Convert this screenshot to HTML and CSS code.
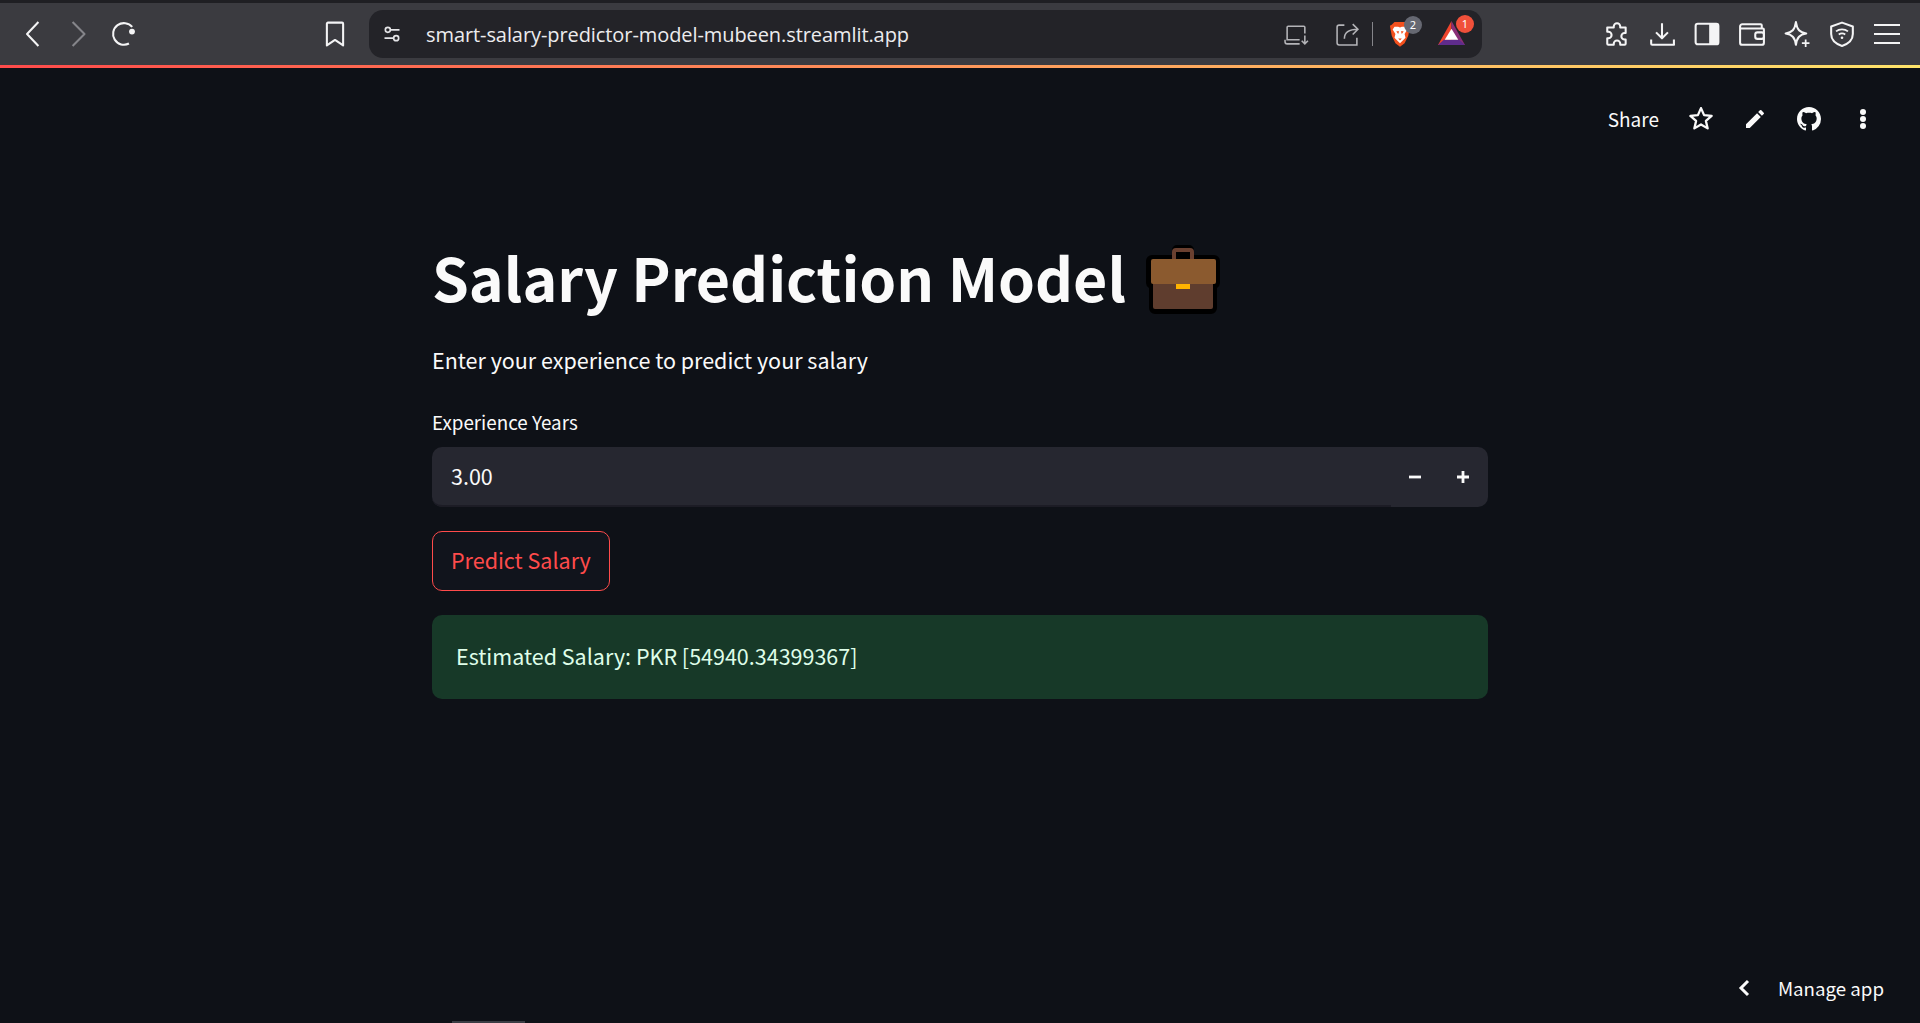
FILE: index.html
```html
<!DOCTYPE html>
<html>
<head>
  <title>Salary Prediction Model</title>
  <link rel="stylesheet" href="styles.css">
</head>
<body>
  <div class="top-strip"></div>
  <div class="toolbar">
    <div class="nav-buttons">
      <svg class="tool-icon" viewBox="0 0 24 24"><path d="M17 1 6.500 12 17 23"/></svg>
      <svg class="tool-icon dim" viewBox="0 0 24 24"><path d="M7 1l11 11L7 23"/></svg>
      <svg class="tool-icon" viewBox="0 0 24 24"><path d="M17.500 20.800A10 10 0 1 1 20.500 5.500"/><circle class="solid" cx="20.300" cy="9.800" r="2.700"/></svg>
    </div>
    <svg class="tool-icon bookmark" viewBox="0 0 24 24"><path d="M5.500 1.500h13a1 1 0 0 1 1 1v20L12 17.500l-7.500 5v-20a1 1 0 0 1 1-1z"/></svg>
    <div class="address-bar">
      <svg class="small-icon" viewBox="0 0 24 24"><circle cx="7" cy="7" r="3"/><path d="M10 7h11M3 17h11"/><circle cx="17" cy="17" r="3"/></svg>
      <span class="url">smart-salary-predictor-model-mubeen.streamlit.app</span>
      <svg class="addr-icon laptop" viewBox="0 0 24 24"><path d="M15 17H3V5a1 1 0 0 1 1-1h15a1 1 0 0 1 1 1v6M1 17v2a2 2 0 0 0 2 2h12M20 13v8m-3-3 3 3 3-3"/></svg>
      <svg class="addr-icon share-icon" viewBox="0 0 24 24"><path d="M9 3H4a2 2 0 0 0-2 2v15a2 2 0 0 0 2 2h17v-7M9 16c0-6 4-9 13-9M17 2l5 5-5 5"/></svg>
      <div class="addr-sep"></div>
      <div class="shield-wrap">
        <svg class="brave-icon" viewBox="0 0 24 28"><path class="brave-body" d="M6 1h12l3 3 2 1-2 11-4 8-5 4-5-4-4-8L1 5l2-1z"/><path class="brave-face" d="M6 6h4l2 1 2-1h4l2 3-3 5 1 4-6 6-6-6 1-4-3-5z"/><path class="brave-eyes" d="M8 11h3l-1 3zM16 11h-3l1 3zM10 19h4l-2 2z"/></svg>
        <span class="badge badge-gray">2</span>
      </div>
      <div class="bat-wrap">
        <svg class="bat-icon" viewBox="0 0 28 28" preserveAspectRatio="none"><path class="bat-left" d="M14 0 0 28h14z"/><path class="bat-right" d="M14 0l14 28H14z"/><path class="bat-base" d="M0 28l6-6h16l6 6z"/><path class="bat-inner" d="M14 9l7 13H7z"/></svg>
        <span class="badge badge-red">1</span>
      </div>
    </div>
    <div class="extensions">
      <svg class="tool-icon" viewBox="0 0 24 24"><path d="M9 5a3 3 0 1 1 6 0v1h5v5h-1a3 3 0 1 0 0 6h1v4a1 1 0 0 1-1 1h-4v-1a3 3 0 1 0-6 0v1H4a1 1 0 0 1-1-1v-5h1a3 3 0 1 0 0-6H3V6h6z"/></svg>
      <svg class="tool-icon" viewBox="0 0 24 24"><path d="M12 2v14M6.500 10.500 12 16l5.500-5.500M2 17v4a1 1 0 0 0 1 1h20a1 1 0 0 0 0-1v-4"/></svg>
      <svg class="tool-icon" viewBox="0 0 24 24"><rect x="1.500" y="2.500" width="21" height="19" rx="2"/><rect class="solid" x="14" y="2.500" width="8.500" height="19"/></svg>
      <svg class="tool-icon" viewBox="0 0 24 24"><path d="M21 7V4a1 1 0 0 0-1-1H3a2 2 0 0 0-2 2v15a2 2 0 0 0 2 2h18a2 2 0 0 0 2-2V8a1 1 0 0 0-1-1H1"/><rect x="15" y="10.500" width="8" height="6" rx="2"/></svg>
      <svg class="tool-icon" viewBox="0 0 24 24"><path d="M11 1c1 7 3.500 9.500 9.500 10.500C14.500 12.500 12 15 11 22 10 15 7.500 12.500 1.500 11.500 7.500 10.500 10 8 11 1z"/><path class="thin" d="M20 17v7M16.500 20.500h7"/></svg>
      <svg class="tool-icon" viewBox="0 0 24 24"><path d="M12 1.500 22 5v7c0 5-4 9-10 11C6 21 2 17 2 12V5z"/><path class="thin" d="M6.500 9.500c3-2.500 8-2.500 11 0M9 12.500c2-1.500 4-1.500 6 0"/><circle class="solid" cx="12" cy="15.500" r="1.200"/></svg>
      <svg class="tool-icon" viewBox="0 0 24 24"><path d="M0 3.700h24M0 12h24M0 20.300h24"/></svg>
    </div>
  </div>
  <div class="gradient-line"></div>

  <div class="app">
    <div class="app-header">
      <span class="share-link">Share</span>
      <svg class="head-icon" viewBox="1.500 2 21 21"><path class="outline" d="m12 3 2.700 6.100 6.600.7-5 4.400 1.500 6.500L12 17.300l-5.800 3.400 1.500-6.500-5-4.400 6.600-.7z"/></svg>
      <svg class="head-icon" viewBox="0 0 24 24"><path d="M3 17.250V21h3.750L17.810 9.940l-3.750-3.750zM20.710 7.040a1 1 0 0 0 0-1.410l-2.340-2.340a1 1 0 0 0-1.410 0l-1.830 1.830 3.750 3.750z"/></svg>
      <svg class="head-icon" viewBox="0 0 16 16"><path d="M8 0C3.580 0 0 3.580 0 8c0 3.540 2.290 6.530 5.470 7.590.4.070.55-.17.55-.38 0-.19-.01-.82-.01-1.490-2.010.37-2.530-.49-2.690-.94-.09-.23-.48-.94-.82-1.130-.28-.15-.68-.52-.01-.53.63-.01 1.080.58 1.230.82.720 1.210 1.870.87 2.330.66.070-.52.280-.87.510-1.070-1.780-.2-3.640-.89-3.640-3.950 0-.87.310-1.590.82-2.150-.08-.2-.36-1.020.08-2.120 0 0 .67-.21 2.200.82.640-.18 1.320-.27 2-.27s1.360.09 2 .27c1.530-1.040 2.200-.82 2.200-.82.440 1.100.160 1.920.080 2.120.51.560.82 1.270.82 2.150 0 3.070-1.870 3.750-3.650 3.950.29.250.54.730.54 1.480 0 1.070-.01 1.930-.01 2.200 0 .21.150.46.550.38A8.010 8.010 0 0 0 16 8c0-4.420-3.580-8-8-8z"/></svg>
      <svg class="head-icon" viewBox="0 0 24 24"><circle cx="12" cy="5" r="3"/><circle cx="12" cy="12" r="3"/><circle cx="12" cy="19" r="3"/></svg>
    </div>

    <div class="block-container">
      <div class="title-row">
        <h1>Salary Prediction Model</h1>
        <svg class="emoji" viewBox="0 0 74 69">
          <path class="emoji-outline" d="M26 5a5 5 0 0 1 5-5h12a5 5 0 0 1 5 5v5h20a6 6 0 0 1 6 6v22a6 6 0 0 1-3 5v20a6 6 0 0 1-6 6H9a6 6 0 0 1-6-6V43a6 6 0 0 1-3-5V16a6 6 0 0 1 6-6h20z"/>
          <path class="emoji-handle" d="M28 15V7a2 2 0 0 1 2-2h14a2 2 0 0 1 2 2v8"/>
          <rect class="emoji-lower" x="7" y="35" width="60" height="29" rx="2"/>
          <rect class="emoji-upper" x="5" y="14" width="65" height="25" rx="2"/>
          <rect class="emoji-clasp" x="30" y="39" width="14" height="5"/>
        </svg>
      </div>
      <p class="intro">Enter your experience to predict your salary</p>
      <label class="field-label">Experience Years</label>
      <div class="number-input">
        <div class="number-field">3.00</div>
        <div class="stepper">
          <svg class="step-icon" viewBox="0 0 12 12"><path d="M0 6h12"/></svg>
          <svg class="step-icon" viewBox="0 0 12 12"><path d="M0 6h12M6 0v12"/></svg>
        </div>
      </div>
      <button class="predict-button">Predict Salary</button>
      <div class="success-box">Estimated Salary: PKR [54940.34399367]</div>
    </div>

    <div class="manage-app">
      <svg class="manage-chevron" viewBox="0 0 12 18"><path d="M10 2 3 9l7 7"/></svg>
      <span>Manage app</span>
    </div>
    <div class="scroll-thumb"></div>
  </div>
</body>
</html>
```

FILE: styles.css
```css
* {
  box-sizing: border-box;
}

body {
  margin: 0;
  height: 1023px;
  overflow: hidden;
  display: flex;
  flex-direction: column;
  background-color: #0e1117;
  font-family: "Noto Sans CJK JP", "Noto Sans", sans-serif;
  color: #fafafa;
}

/* browser chrome */
.top-strip {
  height: 3px;
  background-color: #1f1f23;
}

.toolbar {
  height: 62px;
  display: flex;
  align-items: center;
  background-color: #3b3b40;
}

.tool-icon {
  width: 26px;
  height: 26px;
  fill: none;
  stroke: #f4f4f5;
  stroke-width: 1.900;
  stroke-linejoin: round;
  flex-shrink: 0;
}

.tool-icon .solid {
  fill: #f4f4f5;
  stroke: none;
}

.tool-icon .thin {
  stroke-width: 1.600;
}

.tool-icon.dim {
  stroke: #85858a;
}

.nav-buttons {
  display: flex;
  gap: 19px;
  margin-left: 20px;
}

.bookmark {
  margin-left: 186px;
}

.address-bar {
  width: 1113px;
  height: 48px;
  margin-left: 21px;
  padding: 0 17px 0 13px;
  display: flex;
  align-items: center;
  background-color: #232328;
  border-radius: 14px;
}

.small-icon {
  width: 20px;
  height: 20px;
  fill: none;
  stroke: #e4e4e7;
  stroke-width: 2;
}

.url {
  margin-left: 24px;
  font-family: "Open Sans", sans-serif;
  font-size: 20px;
  letter-spacing: -0.08px;
  color: #ececee;
  white-space: nowrap;
}

.addr-icon {
  width: 25px;
  height: 25px;
  fill: none;
  stroke: #b4b4b8;
  stroke-width: 1.500;
}

.laptop {
  margin-left: auto;
}

.share-icon {
  margin-left: 26px;
}

.addr-sep {
  width: 1px;
  height: 24px;
  margin-left: 12.500px;
  background-color: #85858a;
}

.shield-wrap,
.bat-wrap {
  position: relative;
  display: flex;
}

.shield-wrap {
  margin-left: 16px;
}

.brave-icon {
  width: 22px;
  height: 28px;
}

.brave-body {
  fill: #f4511e;
}

.brave-face {
  fill: #fff;
}

.brave-eyes {
  fill: #f4511e;
}

.bat-wrap {
  margin-left: 27px;
  margin-bottom: 3px;
}

.bat-icon {
  width: 27px;
  height: 24px;
}

.bat-left {
  fill: #f0442c;
}

.bat-right {
  fill: #8a2f78;
}

.bat-base {
  fill: #5f2c8c;
}

.bat-inner {
  fill: #fff;
}

.badge {
  position: absolute;
  width: 18px;
  height: 18px;
  border-radius: 50%;
  text-align: center;
  font-family: "Noto Sans", sans-serif;
  font-size: 11px;
  line-height: 18px;
  color: #fff;
}

.badge-gray {
  top: -4px;
  right: -11px;
  background-color: #666872;
}

.badge-red {
  top: -6px;
  right: -9px;
  background-color: #f0503a;
}

.extensions {
  display: flex;
  gap: 19px;
  margin-left: 122px;
}

.gradient-line {
  height: 3px;
  background: linear-gradient(to right, #ff4b4b, #ffe46b 100%);
}

/* streamlit app */
.app {
  flex: 1;
  position: relative;
}

.app-header {
  height: 102px;
  padding-right: 30px;
  display: flex;
  align-items: center;
  justify-content: flex-end;
}

.share-link {
  margin-right: 15px;
  padding-bottom: 2px;
  font-size: 19px;
}

.head-icon {
  width: 24px;
  height: 24px;
  margin-left: 15px;
  margin-right: 15px;
  fill: #fafafa;
}

.head-icon .outline {
  fill: none;
  stroke: #fafafa;
  stroke-width: 2;
  stroke-linejoin: round;
}

.block-container {
  width: 1056px;
  margin: 0 auto;
  padding-top: 70px;
}

.title-row {
  display: flex;
  align-items: center;
  height: 78px;
}

h1 {
  margin: 0 0 7px;
  font-size: 59.100px;
  font-weight: 700;
  line-height: 78px;
}

.emoji {
  width: 74px;
  height: 69px;
  margin-left: 20px;
}

.emoji-outline {
  fill: #000;
}

.emoji-handle {
  fill: none;
  stroke: #6a4030;
  stroke-width: 4;
}

.emoji-upper {
  fill: #8b5a2f;
}

.emoji-lower {
  fill: #5f3d2e;
}

.emoji-clasp {
  fill: #ffb300;
}

.intro {
  margin: 26px 0 0;
  font-size: 21.500px;
  line-height: 32px;
}

.field-label {
  display: block;
  margin-top: 34px;
  font-size: 18.800px;
  line-height: 24px;
}

.number-input {
  height: 60px;
  margin-top: 13px;
  display: flex;
  background-color: #262730;
  border-radius: 10px;
}

.number-field {
  flex: 1;
  padding: 0 0 1px 19px;
  display: flex;
  align-items: center;
  border-bottom: 2px solid #1c1c25;
  border-radius: 0 0 0 10px;
  font-size: 21.500px;
}

.stepper {
  width: 97px;
  padding: 0 19px 0 18px;
  display: flex;
  align-items: center;
  gap: 36px;
}

.step-icon {
  width: 12px;
  height: 12px;
  fill: none;
  stroke: #fafafa;
  stroke-width: 2.800;
}

.predict-button {
  display: block;
  height: 60px;
  margin-top: 24px;
  padding: 0 18px 4px;
  background-color: #11141c;
  border: 1px solid #ff4b4b;
  border-radius: 10px;
  color: #ff4b4b;
  font-family: inherit;
  font-size: 21.500px;
}

.success-box {
  height: 84px;
  margin-top: 24px;
  padding: 0 0 3px 24px;
  display: flex;
  align-items: center;
  background-color: #173928;
  border-radius: 10px;
  color: #dffde9;
  font-size: 21.500px;
}

.manage-app {
  position: absolute;
  right: 36px;
  bottom: 22px;
  display: flex;
  align-items: center;
  gap: 28px;
  font-size: 18.700px;
}

.manage-chevron {
  width: 12px;
  height: 18px;
  fill: none;
  stroke: #fafafa;
  stroke-width: 3;
}

.scroll-thumb {
  position: absolute;
  left: 452px;
  bottom: 0;
  width: 73px;
  height: 2px;
  background-color: #3a3d44;
}
```
